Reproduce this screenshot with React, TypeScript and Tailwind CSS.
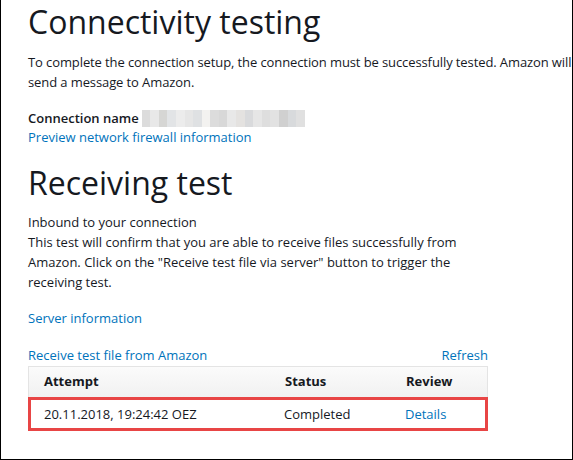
export default function App() {
  const font = { fontFamily: '"Open Sans", "Noto Sans", Arial, sans-serif' };
  return (
    <div
      className="w-[573px] h-[460px] overflow-hidden bg-white border-l border-r border-b border-black text-[#16191f]"
      style={font}
    >
      <div className="pl-[27px] w-[700px]">
        <h1 className="text-[32px] leading-[40px] font-normal mt-[2px]">Connectivity testing</h1>
        <p className="text-[13px] leading-[20px] mt-[10px] tracking-[-0.1px]">
          <span className="block whitespace-nowrap">
            To complete the connection setup, the connection must be successfully tested. Amazon will send a test file to your server
          </span>
          <span className="block whitespace-nowrap">send a message to Amazon.</span>
        </p>
        <div className="mt-[16px] flex items-center text-[13px] leading-[20px]">
          <span className="font-semibold">Connection name</span>
          <span className="ml-[3px] inline-flex h-[17px] w-[163px]">
            <span className="flex-1 bg-[#dcdcdc]" />
            <span className="flex-1 bg-[#e8e8e8]" />
            <span className="flex-1 bg-[#d6d6d4]" />
            <span className="flex-1 bg-[#e2e4e6]" />
            <span className="flex-1 bg-[#ececec]" />
            <span className="flex-1 bg-[#e6e6e6]" />
            <span className="flex-1 bg-[#dfe1e3]" />
            <span className="flex-1 bg-[#f3f2f0]" />
            <span className="flex-1 bg-[#dcdcdc]" />
            <span className="flex-1 bg-[#d8d8d8]" />
            <span className="flex-1 bg-[#e8e8e8]" />
            <span className="flex-1 bg-[#e4e2e0]" />
            <span className="flex-1 bg-[#d9dadc]" />
            <span className="flex-1 bg-[#e6e6e6]" />
            <span className="flex-1 bg-[#dedede]" />
            <span className="flex-1 bg-[#e2e2e2]" />
            <span className="flex-1 bg-[#d0d0d0]" />
            <span className="flex-1 bg-[#d8dadc]" />
            <span className="flex-1 bg-[#e0e0e0]" />
          </span>
        </div>
        <a className="block text-[13px] leading-[20px] text-[#0073bb] -mt-[1px]">Preview network firewall information</a>
        <h2 className="text-[32px] leading-[40px] font-normal mt-[16px]">Receiving test</h2>
        <div className="text-[13px] leading-[20px] mt-[9px]">
          <p>Inbound to your connection</p>
          <p>
            <span className="block whitespace-nowrap">This test will confirm that you are able to receive files successfully from</span>
            <span className="block whitespace-nowrap">Amazon. Click on the "Receive test file via server" button to trigger the</span>
            <span className="block whitespace-nowrap">receiving test.</span>
          </p>
        </div>
        <a className="block text-[13px] leading-[20px] text-[#0073bb] mt-[16px]">Server information</a>
        <div className="w-[460px] mt-[17px]">
          <div className="flex justify-between text-[13px] leading-[20px] text-[#0073bb]">
            <a>Receive test file from Amazon</a>
            <a>Refresh</a>
          </div>
          <div className="mt-[1px]">
            <div className="flex h-[31px] items-center bg-gradient-to-b from-[#fbfbfb] to-[#f1f1f1] border-t border-l border-r border-[#e4e4e4] text-[13px] font-bold">
              <span className="w-[256px] pl-[15px]">Attempt</span>
              <span className="w-[121px]">Status</span>
              <span>Review</span>
            </div>
            <div className="flex h-[34px] items-center border-[3px] border-[#e84545] text-[13px] w-[460px]">
              <span className="w-[253px] pl-[13px] pt-[1px]">20.11.2018, 19:24:42 OEZ</span>
              <span className="w-[121px] pt-[1px]">Completed</span>
              <a className="text-[#0073bb] pt-[1px]">Details</a>
            </div>
          </div>
        </div>
      </div>
    </div>
  );
}
